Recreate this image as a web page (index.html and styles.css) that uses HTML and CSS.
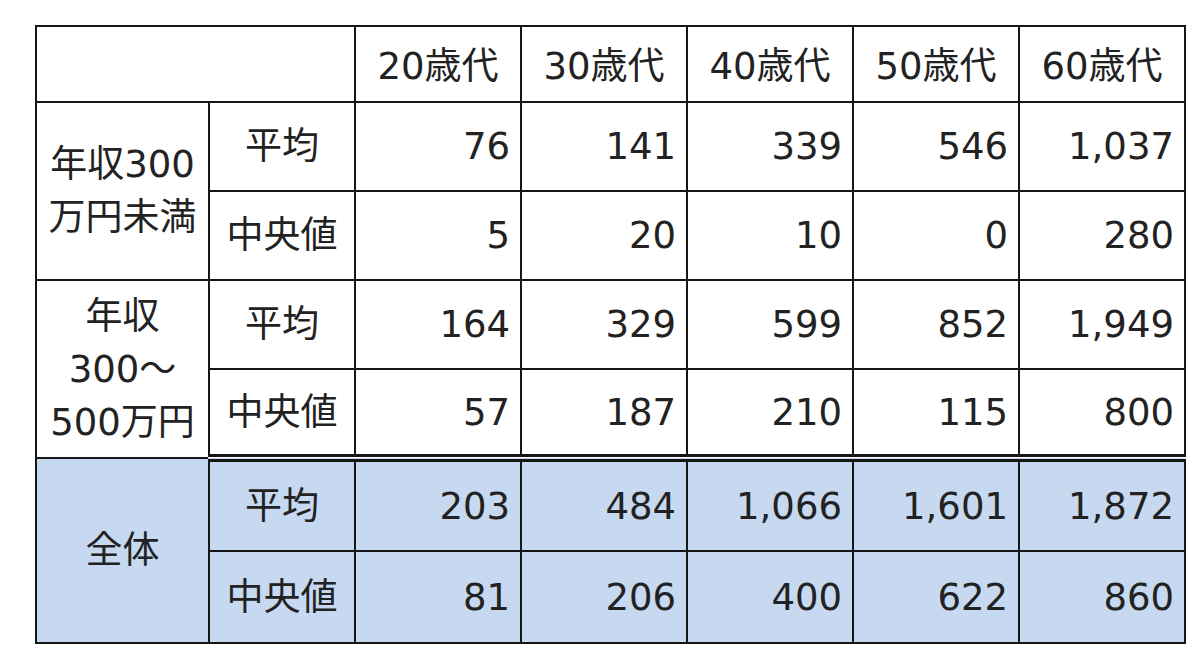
FILE: index.html
```html
<!DOCTYPE html>
<html lang="ja">
<head>
<meta charset="utf-8">
<title>年収別 貯蓄額</title>
<link rel="stylesheet" href="styles.css">
</head>
<body>
<table class="stats">
  <colgroup>
    <col class="c-group">
    <col class="c-kind">
    <col class="c-num"><col class="c-num"><col class="c-num"><col class="c-num"><col class="c-num">
  </colgroup>
  <thead>
    <tr class="head">
      <th colspan="2"></th>
      <th>20歳代</th>
      <th>30歳代</th>
      <th>40歳代</th>
      <th>50歳代</th>
      <th>60歳代</th>
    </tr>
  </thead>
  <tbody>
    <tr class="row">
      <th rowspan="2" class="group">年収300<br>万円未満</th>
      <th class="kind">平均</th>
      <td>76</td><td>141</td><td>339</td><td>546</td><td>1,037</td>
    </tr>
    <tr class="row">
      <th class="kind">中央値</th>
      <td>5</td><td>20</td><td>10</td><td>0</td><td>280</td>
    </tr>
    <tr class="row">
      <th rowspan="2" class="group">年収<br>300～<br>500万円</th>
      <th class="kind">平均</th>
      <td>164</td><td>329</td><td>599</td><td>852</td><td>1,949</td>
    </tr>
    <tr class="row sep">
      <th class="kind">中央値</th>
      <td>57</td><td>187</td><td>210</td><td>115</td><td>800</td>
    </tr>
    <tr class="row total first-total">
      <th rowspan="2" class="group">全体</th>
      <th class="kind">平均</th>
      <td>203</td><td>484</td><td>1,066</td><td>1,601</td><td>1,872</td>
    </tr>
    <tr class="row total last-total">
      <th class="kind">中央値</th>
      <td>81</td><td>206</td><td>400</td><td>622</td><td>860</td>
    </tr>
  </tbody>
</table>
</body>
</html>
```

FILE: styles.css
```css
html, body {
  margin: 0;
  padding: 0;
  background: #ffffff;
}

body {
  font-family: "DejaVu Sans", "Noto Sans CJK JP", sans-serif;
  color: #222222;
  font-size: 37px;
}

.stats {
  border-collapse: collapse;
  margin: 25px 0 0 35px;
  table-layout: fixed;
  width: 1149px;
}

.c-group { width: 173px; }
.c-kind { width: 146px; }
.c-num { width: 166px; }

.stats th,
.stats td {
  border: 2px solid #161616;
  padding: 0;
  font-weight: 400;
  line-height: 53px;
}

.head { height: 76px; }
.head th { text-align: center; padding-top: 4px; }

.row { height: 89px; }

.group,
.kind {
  text-align: center;
}

.stats td {
  text-align: right;
  padding-right: 10px;
}

.sep th,
.sep td {
  border-bottom: 8px double #161616;
}

.total th,
.total td {
  background: #c6d9f0;
}

.first-total { height: 93px; }
.last-total { height: 92px; }
```
